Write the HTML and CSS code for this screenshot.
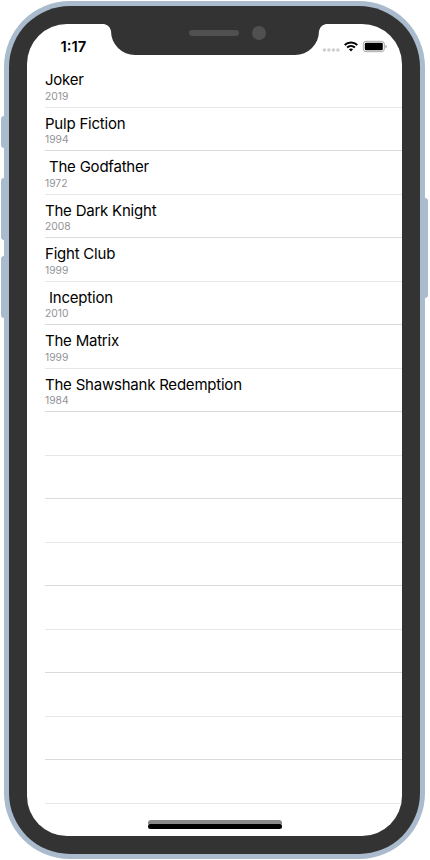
FILE: index.html
```html
<!DOCTYPE html>
<html lang="en">
<head>
<meta charset="utf-8">
<title>Movies</title>
<link rel="stylesheet" href="styles.css">
</head>
<body>
<div class="phone">
  <i class="button mute"></i><i class="button volume-up"></i><i class="button volume-down"></i><i class="button power"></i>
  <div class="bezel">
    <main class="screen">
      <div class="notch"><i class="speaker"></i><i class="camera"></i></div>
      <header class="status">
        <span class="time">1:17</span>
        <svg class="indicators" width="66" height="14" viewBox="0 0 66 14">
          <g fill="#cfcfcf"><circle cx="2.4" cy="10" r="1.8"/><circle cx="6.9" cy="10" r="1.8"/><circle cx="11.4" cy="10" r="1.8"/><circle cx="15.9" cy="10" r="1.8"/></g>
          <g fill="none" stroke="#000" stroke-width="2"><path d="M22.7 4.9a9.2 9.2 0 0 1 12.6 0"/><path d="M25.1 7.6a5.7 5.7 0 0 1 7.8 0"/></g>
          <path d="M26.9 9.3a3.2 3.2 0 0 1 4.2 0L29 11.5z"/>
          <rect x="41.3" y="1.3" width="21" height="10.4" rx="2.7" fill="#fff" stroke="#a9a9a9"/>
          <rect x="42.8" y="2.8" width="18" height="7.4" rx="1.3"/>
          <path d="M63.4 4.8q1.5.5 1.5 1.7t-1.5 1.7z" fill="#a9a9a9"/>
        </svg>
      </header>
      <ul class="list">
        <li><b>Joker</b><small>2019</small></li>
        <li><b>Pulp Fiction</b><small>1994</small></li>
        <li><b> The Godfather</b><small>1972</small></li>
        <li><b>The Dark Knight</b><small>2008</small></li>
        <li><b>Fight Club</b><small>1999</small></li>
        <li><b> Inception</b><small>2010</small></li>
        <li><b>The Matrix</b><small>1999</small></li>
        <li><b>The Shawshank Redemption</b><small>1984</small></li>
        <li></li><li></li><li></li><li></li><li></li><li></li><li></li><li></li><li></li>
      </ul>
      <i class="home shade"></i><i class="home"></i>
    </main>
  </div>
</div>
</body>
</html>
```
FILE: styles.css
```css
* { box-sizing: border-box; }
body { margin: 0; background: #fff; color: #000; font-family: Inter, "Liberation Sans", sans-serif; overflow: hidden; }
.phone { position: relative; width: 421px; height: 858px; margin: 1px 0 0 4px; padding: 5px; background: #a9bbcc; border-radius: 66px; }
.bezel { height: 848px; padding: 18px; background: #333; border-radius: 61px; }
.screen { position: relative; width: 375px; height: 812px; background: #fff; border-radius: 40px; overflow: hidden; }
.button { position: absolute; left: -3px; width: 4px; background: #a9bbcc; border-radius: 3px 0 0 3px; }
.mute { top: 115px; height: 32px; }
.volume-up { top: 177px; height: 62px; }
.volume-down { top: 255px; height: 62px; }
.power { left: auto; right: -3px; top: 197px; height: 100px; border-radius: 0 3px 3px 0; }
.notch { position: absolute; top: 0; left: 84px; width: 208px; height: 31px; background: #333; border-radius: 0 0 24px 24px; }
.notch::before, .notch::after { content: ""; position: absolute; top: 0; width: 8px; height: 8px; }
.notch::before { left: -8px; background: radial-gradient(circle at 0 100%, #fff 7.5px, #333 8.3px); }
.notch::after { right: -8px; background: radial-gradient(circle at 100% 100%, #fff 7.5px, #333 8.3px); }
.speaker { position: absolute; left: 78px; top: 6px; width: 50px; height: 6px; border-radius: 3px; background: #505050; }
.camera { position: absolute; left: 141.4px; top: 2px; width: 14px; height: 14px; border-radius: 50%; background: #505050; }
.status { display: flex; justify-content: space-between; align-items: flex-start; height: 40px; padding: 14px 14px 0 33.5px; }
.time { font-size: 14.8px; line-height: 18px; font-weight: 600; }
.indicators { display: block; margin-top: 2px; }
.list { margin: 0 0 0 18px; padding: 0; list-style: none; }
.list li { display: flex; flex-direction: column; height: 43.5px; padding-top: 6px; border-bottom: 1px solid #dbdbdb; }
.list li:nth-child(odd) { border-color: #e6e6e6; }
.list b { font-size: 15px; line-height: 19.5px; font-weight: 400; letter-spacing: -0.22px; white-space: pre; }
.list small { font-size: 10.3px; line-height: 12px; color: #929296; }
.home { position: absolute; left: 120.5px; top: 800px; width: 134px; height: 5px; border-radius: 3px; background: #000; }
.shade { left: 121px; top: 796px; width: 134px; height: 6px; background: #898989; }
```
